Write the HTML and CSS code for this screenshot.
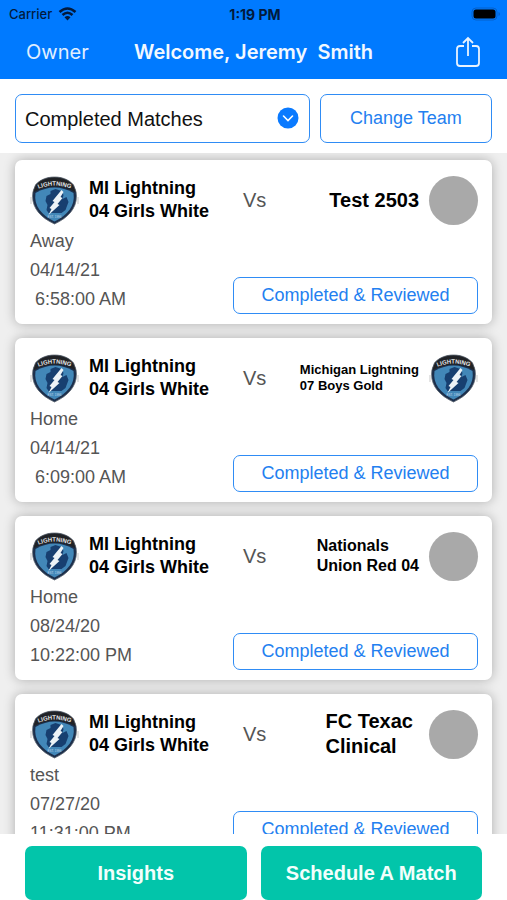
FILE: index.html
```html
<!DOCTYPE html>
<html lang="en">
<head>
<meta charset="utf-8">
<meta name="viewport" content="width=device-width, initial-scale=1">
<title>Matches</title>
<link rel="stylesheet" href="styles.css">
</head>
<body>
<svg class="defs" aria-hidden="true">
  <defs>
    <path id="crest-arc" d="M4 14.500Q24 4.500 44 14.500"/>
    <clipPath id="crest-clip"><path d="M24 1C32 1 39 4 43 9C44 12 46 15 46 20C46 33 37 42 24 48C11 42 2 33 2 20C2 15 4 12 5 9C9 4 16 1 24 1Z"/></clipPath>
    <symbol id="crest" viewBox="0 0 48 49">
      <path d="M.5 21v7M47.500 21v7" stroke="#c9c9c9" stroke-width="1"/>
      <g clip-path="url(#crest-clip)">
        <path fill="#1c2f4c" d="M0 0h48v49H0z"/>
        <path fill="#4287b8" d="M5 17Q24 6 43 17C45 30 37 39 24 45.500C11 39 3 30 5 17Z"/>
        <path fill="#173f70" d="M20 15l5-2 6 2 2 4-1 4 4-2 2 5-3 8-4 3H18l-2-3 1-5-2-4 1-5 4-2z"/>
        <path fill="#202226" d="M0 0h48v18Q24 3 0 18Z"/>
      </g>
      <path d="M24 1C32 1 39 4 43 9C44 12 46 15 46 20C46 33 37 42 24 48C11 42 2 33 2 20C2 15 4 12 5 9C9 4 16 1 24 1Z" fill="none" stroke="#5d6670" stroke-width=".8"/>
      <path fill="#edf3f7" d="M31 14l-9 11 2 1-5 6 2 1-3 6 11-10-2-1 5-6-2-1 3-5z"/>
      <text class="crest-name"><textPath href="#crest-arc" startOffset="50%">LIGHTNING</textPath></text>
      <text class="crest-year" x="24" y="42">EST. 1996</text>
    </symbol>
  </defs>
</svg>

<header class="top">
  <div class="status">
    <span class="carrier">Carrier
      <svg width="19" height="14" viewBox="0 0 18 14" fill="none" stroke="#021a3d" stroke-width="2.600" aria-hidden="true"><path d="M1 5Q9-2 17 5M4 8Q9 3.500 14 8"/><path fill="#021a3d" stroke="none" d="M6 10.200Q9 7.800 12 10.200L9 13.500z"/></svg>
    </span>
    <span class="clock">1:19 PM</span>
    <svg class="battery" width="30" height="14" viewBox="0 0 30 14" aria-hidden="true"><rect x="1" y="1" width="25" height="12" rx="4" fill="none" stroke="#0560cb" stroke-width="1"/><rect x="2.500" y="2.500" width="22" height="9" rx="2.500" fill="#000"/><path d="M27.500 5v4q1.500-.5 1.500-2t-1.500-2z" fill="#0560cb"/></svg>
  </div>
  <nav class="nav">
    <a class="owner" href="#">Owner</a>
    <h1>Welcome, Jeremy&nbsp; Smith</h1>
    <button class="share" type="button" aria-label="Share">
      <svg width="26" height="32" viewBox="0 0 26 32" fill="none" stroke="#e8f3ff" stroke-width="1.800"><path d="M9 10H5q-3 0-3 3V27q0 3 3 3h16q3 0 3-3V13q0-3-3-3h-4M13 20V2M8 7l5-5 5 5"/></svg>
    </button>
  </nav>
</header>

<section class="filters">
  <div class="picker">
    <select aria-label="Match status"><option>Completed Matches</option></select>
    <svg class="chevron" width="22" height="22" viewBox="0 0 22 22" fill="none" aria-hidden="true"><circle cx="11" cy="11" r="10.500" fill="#0a7aff"/><path d="M6.500 9l4.500 4.500L15.500 9" stroke="#fff" stroke-width="1.600" stroke-linecap="round"/></svg>
  </div>
  <button class="outline change" type="button">Change Team</button>
</section>

<main class="list">
  <article class="card">
    <div class="teams">
      <svg class="badge"><use href="#crest"/></svg>
      <h2 class="home">MI Lightning<br>04 Girls White</h2>
      <span class="vs">Vs</span>
      <h2 class="away large">Test 2503</h2>
      <span class="badge blank"></span>
    </div>
    <div class="details">
      <div class="info"><p>Away</p><p>04/14/21</p><p>&nbsp;6:58:00 AM</p></div>
      <button class="outline review" type="button">Completed &amp; Reviewed</button>
    </div>
  </article>
  <article class="card">
    <div class="teams">
      <svg class="badge"><use href="#crest"/></svg>
      <h2 class="home">MI Lightning<br>04 Girls White</h2>
      <span class="vs">Vs</span>
      <h2 class="away small">Michigan Lightning<br>07 Boys Gold</h2>
      <svg class="badge"><use href="#crest"/></svg>
    </div>
    <div class="details">
      <div class="info"><p>Home</p><p>04/14/21</p><p>&nbsp;6:09:00 AM</p></div>
      <button class="outline review" type="button">Completed &amp; Reviewed</button>
    </div>
  </article>
  <article class="card">
    <div class="teams">
      <svg class="badge"><use href="#crest"/></svg>
      <h2 class="home">MI Lightning<br>04 Girls White</h2>
      <span class="vs">Vs</span>
      <h2 class="away medium">Nationals<br>Union Red 04</h2>
      <span class="badge blank"></span>
    </div>
    <div class="details">
      <div class="info"><p>Home</p><p>08/24/20</p><p>10:22:00 PM</p></div>
      <button class="outline review" type="button">Completed &amp; Reviewed</button>
    </div>
  </article>
  <article class="card">
    <div class="teams">
      <svg class="badge"><use href="#crest"/></svg>
      <h2 class="home">MI Lightning<br>04 Girls White</h2>
      <span class="vs">Vs</span>
      <h2 class="away large wrapped">FC Texac<br>Clinical</h2>
      <span class="badge blank"></span>
    </div>
    <div class="details">
      <div class="info"><p>test</p><p>07/27/20</p><p>11:31:00 PM</p></div>
      <button class="outline review" type="button">Completed &amp; Reviewed</button>
    </div>
  </article>
</main>

<footer class="actions">
  <button type="button">Insights</button>
  <button type="button">Schedule A Match</button>
</footer>
</body>
</html>
```
FILE: styles.css
```css
* { box-sizing: border-box; }

body {
  margin: 0;
  height: 100vh;
  display: flex;
  flex-direction: column;
  overflow: hidden;
  background: #fff;
  color: #000;
  font-family: "Liberation Sans", Arial, sans-serif;
}

h1, h2, p { margin: 0; }
button, select { font: inherit; cursor: pointer; }

.defs { position: absolute; width: 0; height: 0; }
.crest-name { font-size: 6px; font-weight: 700; fill: #e4e6e8; text-anchor: middle; }
.crest-year { font-size: 3px; fill: #c4dced; text-anchor: middle; }

.top {
  background: #007aff;
  font-family: Inter, sans-serif;
}

.status {
  display: grid;
  grid-template-columns: 1fr auto 1fr;
  align-items: center;
  height: 28px;
  padding: 0 6px 0 9px;
  font-size: 13px;
  color: #021a3d;
}
.carrier {
  display: flex;
  align-items: center;
  gap: 6px;
  font-weight: 500;
}
.clock { font-size: 14px; font-weight: 700; }
.battery { justify-self: end; }

.nav {
  display: grid;
  grid-template-columns: 1fr auto 1fr;
  align-items: center;
  height: 51px;
  padding: 0 26px 3px;
  color: #f2f8ff;
}
.owner { color: #e0efff; font-size: 20px; text-decoration: none; }
.nav h1 { font-size: 20px; font-weight: 600; }
.share {
  justify-self: end;
  display: flex;
  padding: 0;
  border: 0;
  background: none;
}

.filters {
  display: flex;
  gap: 10px;
  padding: 15px 15px 10px;
}
.picker { position: relative; flex: 296; }
.picker select {
  appearance: none;
  display: block;
  width: 100%;
  height: 49px;
  padding: 0 40px 0 9px;
  border: 1px solid #2f8cf5;
  border-radius: 7px;
  background: #fff;
  color: #111;
  font-size: 20px;
}
.chevron { position: absolute; right: 11px; top: 13px; pointer-events: none; }

.outline {
  border: 1px solid #2f8cf5;
  border-radius: 7px;
  background: #fff;
  color: #2380f0;
  font-size: 18px;
}
.change { flex: 171; padding: 0; }

.list {
  flex: 1;
  min-height: 0;
  overflow: hidden;
  padding: 7px 15px 0;
  background: #efefef;
}

.card {
  height: 164px;
  margin-bottom: 14px;
  padding: 15px 14px 10px 15px;
  border-radius: 7px;
  background: #fff;
  box-shadow: 0 0 12px rgba(0, 0, 0, 0.28);
}

.teams { display: flex; align-items: center; height: 50px; }
.badge { flex: none; width: 49px; height: 49px; }
.blank { border-radius: 50%; background: #a9a9a9; }
.home {
  width: 164px;
  padding-left: 10px;
  font-size: 18px;
  line-height: 23px;
}
.vs { color: #555; font-size: 20px; }
.away { margin-left: auto; padding-right: 10px; }
.large { font-size: 20px; line-height: 25px; }
.medium { font-size: 16px; line-height: 20px; }
.small { font-size: 13px; line-height: 16px; }
.wrapped { padding-right: 16px; }

.details {
  display: flex;
  justify-content: space-between;
  align-items: flex-end;
}
.info {
  padding-top: 2px;
  color: #555;
  font-size: 18px;
  line-height: 29px;
}
.review {
  width: 245px;
  height: 37px;
  padding: 0;
}

.actions {
  display: grid;
  grid-template-columns: 1fr 1fr;
  gap: 14px;
  padding: 12px 25px 0;
}
.actions button {
  height: 54px;
  padding: 0;
  border: 0;
  border-radius: 7px;
  background: #02c5aa;
  color: #f2fffc;
  font-size: 20px;
  font-weight: 700;
}
```
